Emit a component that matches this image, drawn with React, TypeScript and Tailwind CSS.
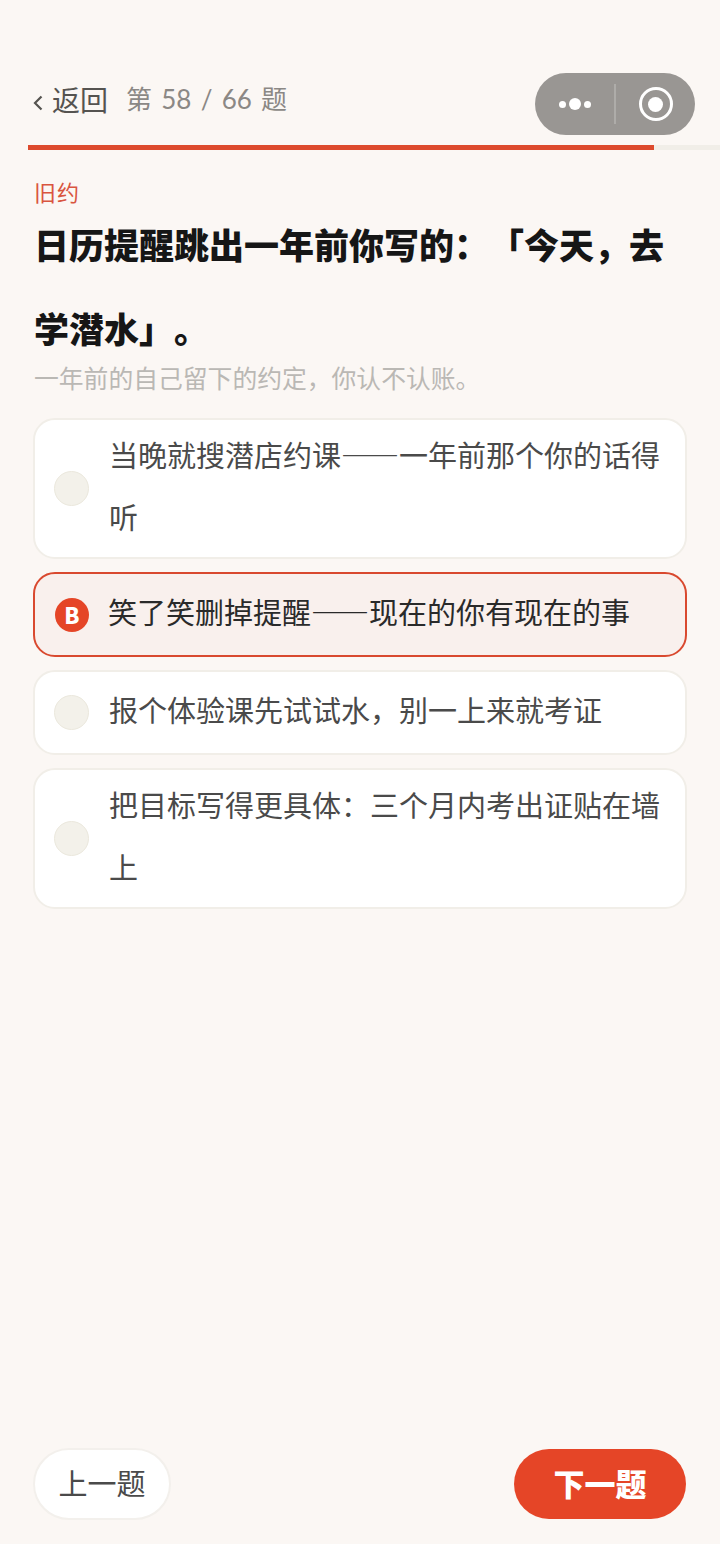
type Option = { text: string; letter?: string };

const options: Option[] = [
  { text: "当晚就搜潜店约课——一年前那个你的话得听" },
  { text: "笑了笑删掉提醒——现在的你有现在的事", letter: "B" },
  { text: "报个体验课先试试水，别一上来就考证" },
  { text: "把目标写得更具体：三个月内考出证贴在墙上" },
];

function OptionCard({ option }: { option: Option }) {
  if (option.letter) {
    return (
      <div className="flex min-h-[85px] items-center gap-[19px] rounded-[22px] border-2 border-[#d9492f] bg-[#f9f0ed] py-[6.5px] pr-[20px] pl-[20px]">
        <div className="flex h-[34px] w-[34px] shrink-0 items-center justify-center rounded-full bg-[#e54527] text-[22px] font-black text-white">
          {option.letter}
        </div>
        <p className="-translate-y-[4px] text-[29px] leading-[62px] text-[#2a2a2a] [font-variant-east-asian:full-width]">
          {option.text}
        </p>
      </div>
    );
  }
  return (
    <div className="flex min-h-[85px] items-center gap-[20px] rounded-[22px] border-2 border-[#f1eee8] bg-white py-[6.5px] pr-[20px] pl-[19px]">
      <div className="h-[35px] w-[35px] shrink-0 rounded-full border border-[#ebe8dd] bg-[#f3f1ea]" />
      <p className="-translate-y-[4px] text-[29px] leading-[62px] text-[#4a4a4a] [font-variant-east-asian:full-width]">
        {option.text}
      </p>
    </div>
  );
}

export default function App() {
  return (
    <div
      className="relative flex h-[1544px] w-[720px] flex-col bg-[#fbf7f4] [text-spacing-trim:space-all]"
      style={{ fontFamily: '"Noto Sans CJK SC", sans-serif' }}
    >
      <header className="flex h-[145px] items-start pt-[79px] pl-[33px]">
        <div className="flex items-center text-[#555350]">
          <svg className="mt-[7px]" width="10" height="16" viewBox="0 0 10 16" fill="none">
            <path d="M8.5 1.5 2 8l6.5 6.5" stroke="currentColor" strokeWidth="2.2" />
          </svg>
          <span className="ml-[9px] text-[28px] leading-[40px]">返回</span>
        </div>
        <span
          className="ml-[18px] text-[26px] leading-[40px] text-[#8b8885] [word-spacing:2.6px]"
          style={{ fontFamily: '"Lato", "Noto Sans CJK SC", sans-serif' }}
        >
          第 58 / 66 题
        </span>
      </header>

      {/* menu capsule sits over the header */}
      <div className="absolute top-[73px] left-[535px] flex h-[62px] w-[160px] items-center rounded-full bg-[#999693]">
        <div className="flex w-[79px] items-center justify-center gap-[3px]">
          <span className="h-[7px] w-[7px] rounded-full bg-white" />
          <span className="h-[12px] w-[12px] rounded-full bg-white" />
          <span className="h-[7px] w-[7px] rounded-full bg-white" />
        </div>
        <span className="h-[40px] w-[2px] bg-[#aeaca9]" />
        <div className="flex flex-1 items-center justify-center">
          <div className="flex h-[34px] w-[34px] items-center justify-center rounded-full border-[3px] border-white">
            <span className="h-[15px] w-[15px] rounded-full bg-white" />
          </div>
        </div>
      </div>

      <div className="ml-[28px] h-[5px] bg-[#f1eee8]">
        <div className="h-full w-[626px] bg-[#dd4a2d]" />
      </div>

      <main className="flex flex-1 flex-col px-[33px]">
        <p className="mt-[26px] ml-[1px] text-[22px] leading-[30px] tracking-[1px] text-[#d9553f]">旧约</p>
        <h1 className="mt-[-4px] ml-[1px] text-[35px] leading-[84px] font-black text-[#161616]">
          日历提醒跳出一年前你写的：「今天，去学潜水」。
        </h1>
        <p className="mt-[-11px] ml-[1px] text-[24.8px] leading-[36px] text-[#bab8b4]">
          一年前的自己留下的约定，你认不认账。
        </p>
        <div className="mt-[23px] flex flex-col gap-[13px]">
          {options.map((option) => (
            <OptionCard key={option.text} option={option} />
          ))}
        </div>
      </main>

      <footer className="flex items-center justify-between px-[33px] pb-[24px]">
        <button className="flex h-[72px] w-[138px] items-center justify-center rounded-full border-2 border-[#f3f0ec] bg-white pb-[2px] text-[29px] text-[#4a4a4a]">
          上一题
        </button>
        <button className="mr-[1px] flex h-[70px] w-[172px] items-center justify-center rounded-full bg-[#e54527] pb-[2px] text-[31px] font-black text-white">
          下一题
        </button>
      </footer>
    </div>
  );
}
